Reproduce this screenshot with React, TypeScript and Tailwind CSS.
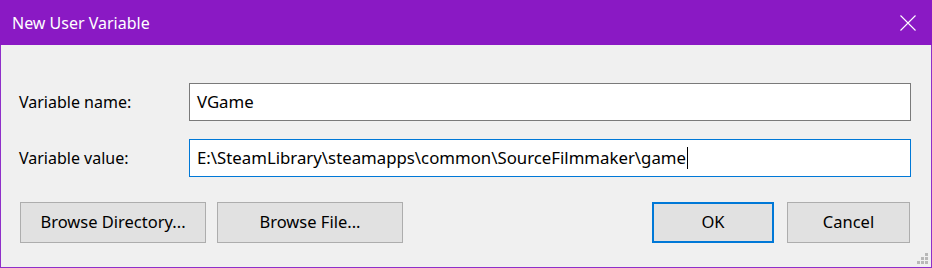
import React from "react";

export default function App() {
  const font = { fontFamily: '"Noto Sans", "Open Sans", sans-serif' };
  return (
    <div className="w-[932px] h-[268px] flex flex-col bg-[#f0f0f0] border border-[#8f2fc9]" style={font}>
      <div className="h-[45px] shrink-0 bg-[#8a19c4] flex items-center justify-between pl-[12px] pr-[16px] -mt-px -mx-px">
        <span className="text-white text-[16px] leading-none">New User Variable</span>
        <svg width="16" height="16" viewBox="0 0 16 16" className="block">
          <path d="M0.5 0.5 L15.5 15.5 M15.5 0.5 L0.5 15.5" stroke="white" strokeWidth="1.1" fill="none" />
        </svg>
      </div>
      <div className="flex-1 relative flex flex-col pt-[38px] pl-[18px] pr-[20px]">
        <div className="flex items-center h-[38px]">
          <span className="w-[170px] text-[16px] text-black">Variable name:</span>
          <div className="flex-1 h-[38px] bg-white border border-[#7a7a7a] flex items-center pl-[7px] text-[16.8px] text-black">VGame</div>
        </div>
        <div className="flex items-center h-[38px] mt-[18px]">
          <span className="w-[170px] text-[16px] text-black">Variable value:</span>
          <div className="flex-1 h-[38px] bg-white border border-[#0078d7] flex items-center pl-[7px] text-[16.8px] text-black">
            <span>E:\SteamLibrary\steamapps\common\SourceFilmmaker\game</span>
            <span className="w-px h-[22px] bg-black ml-px" />
          </div>
        </div>
        <div className="flex items-center mt-[25px] h-[41px] pl-px pr-px">
          <button className="w-[186px] h-[41px] bg-[#e1e1e1] border border-[#adadad] text-[16.5px] text-black">Browse Directory...</button>
          <button className="w-[186px] h-[41px] bg-[#e1e1e1] border border-[#adadad] text-[16.5px] text-black ml-[11px]">Browse File...</button>
          <div className="flex-1" />
          <button className="w-[122px] h-[41px] bg-[#e1e1e1] border-2 border-[#0078d7] text-[16.5px] text-black">OK</button>
          <button className="w-[123px] h-[41px] bg-[#e1e1e1] border border-[#adadad] text-[16.5px] text-black ml-[13px]">Cancel</button>
        </div>
        <svg width="12" height="12" viewBox="0 0 12 12" className="absolute right-[2px] bottom-[2px]">
          <rect x="8" y="0" width="3" height="3" fill="#b8b8b8" />
          <rect x="4" y="4" width="3" height="3" fill="#b8b8b8" />
          <rect x="8" y="4" width="3" height="3" fill="#b8b8b8" />
          <rect x="0" y="8" width="3" height="3" fill="#b8b8b8" />
          <rect x="4" y="8" width="3" height="3" fill="#b8b8b8" />
          <rect x="8" y="8" width="3" height="3" fill="#b8b8b8" />
        </svg>
      </div>
    </div>
  );
}
